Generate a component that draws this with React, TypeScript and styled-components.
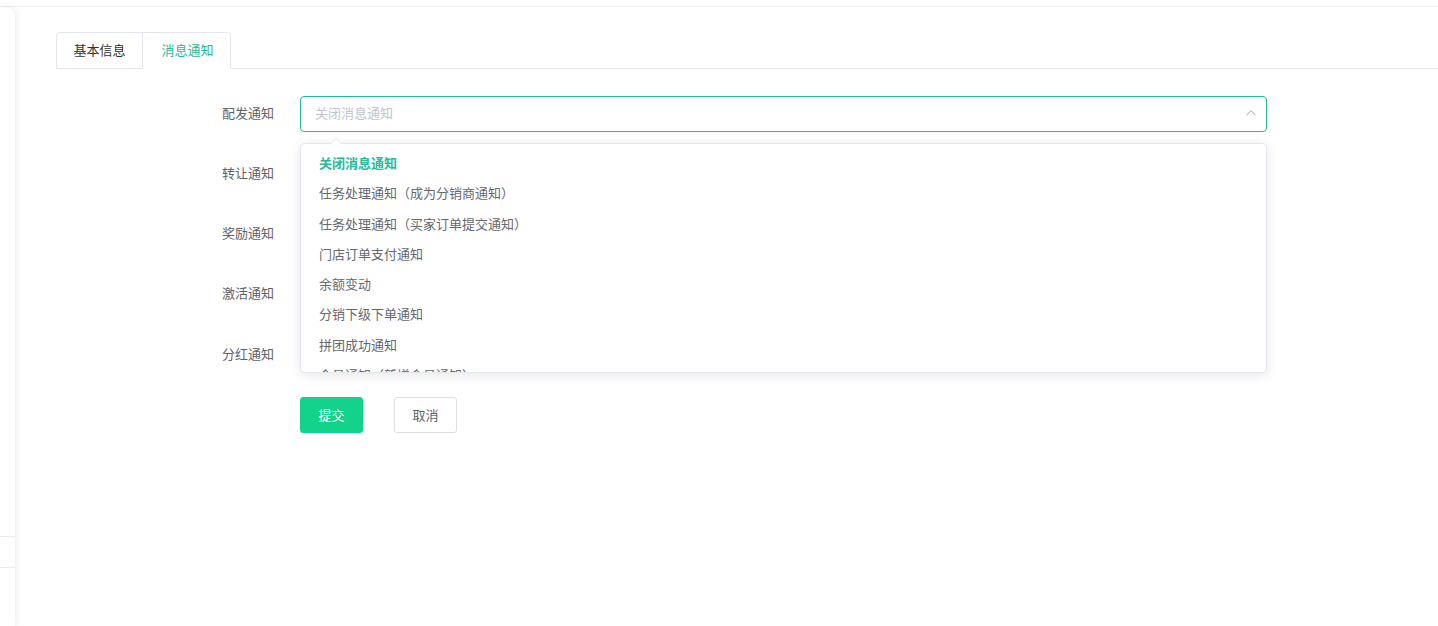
import * as React from 'react'
import styled, { createGlobalStyle } from 'styled-components'

const TEAL = '#26b99a'

const GlobalStyle = createGlobalStyle`
  html, body {
    margin: 0;
    padding: 0;
    background: #ffffff;
  }
  body {
    font-family: "Noto Sans CJK SC", "Noto Sans", sans-serif;
    font-size: 13px;
    color: #606266;
  }
  * {
    box-sizing: border-box;
  }
`

const labels = ['配发通知', '转让通知', '奖励通知', '激活通知', '分红通知']

const options = [
  '关闭消息通知',
  '任务处理通知（成为分销商通知）',
  '任务处理通知（买家订单提交通知）',
  '门店订单支付通知',
  '余额变动',
  '分销下级下单通知',
  '拼团成功通知',
  '会员通知（新增会员通知）',
]

export default function App() {
  return (
    <>
      <GlobalStyle />
      <TopBar />
      <Layout>
        <Sidebar>
          <SideSpacer />
          <SideRow />
          <SideRow />
        </Sidebar>
        <Main>
          <Tabs>
            <Tab>基本信息</Tab>
            <Tab active>消息通知</Tab>
            <TabRest />
          </Tabs>
          <Form>
            {labels.map((label, i) => (
              <FormItem key={label}>
                <Label>{label}</Label>
                {i === 0 && (
                  <SelectWrap>
                    <Select>
                      <Placeholder>关闭消息通知</Placeholder>
                      <svg width="12" height="12" viewBox="0 0 12 12">
                        <path
                          d="M1.5 8 L6 3.8 L10.5 8"
                          fill="none"
                          stroke="#c0c4cc"
                          strokeWidth="1.2"
                        />
                      </svg>
                    </Select>
                    <Dropdown>
                      <Arrow />
                      <OptionList>
                        {options.map((o, j) => (
                          <Option key={o} selected={j === 0}>
                            {o}
                          </Option>
                        ))}
                      </OptionList>
                    </Dropdown>
                  </SelectWrap>
                )}
              </FormItem>
            ))}
            <Actions>
              <Button primary>提交</Button>
              <Button>取消</Button>
            </Actions>
          </Form>
        </Main>
      </Layout>
    </>
  )
}

const TopBar = styled.div`
  height: 7px;
  border-bottom: 1px solid #eeeff2;
`

const Layout = styled.div`
  display: flex;
  min-height: 619px;
`

const Sidebar = styled.div`
  width: 15px;
  flex-shrink: 0;
  display: flex;
  flex-direction: column;
  background: #ffffff;
  border-top-right-radius: 10px;
  box-shadow: 2px 0 6px rgba(0, 0, 0, 0.07);
  z-index: 1;
`

const SideSpacer = styled.div`
  height: 529px;
`

const SideRow = styled.div`
  height: 31px;
  border-top: 1px solid #e8e9ee;
`

const Main = styled.div`
  flex: 1;
  padding: 25px 0 0 41px;
`

const Tabs = styled.div`
  display: flex;
  height: 37px;
`

const Tab = styled.div<{ active?: boolean }>`
  width: ${p => (p.active ? 88 : 87)}px;
  display: flex;
  align-items: center;
  justify-content: center;
  padding: ${p => (p.active ? '0 0 2px 2px' : '0 0 2px 0')};
  border: 1px solid #e4e7ed;
  border-left-width: ${p => (p.active ? 0 : 1)}px;
  border-bottom-color: ${p => (p.active ? '#ffffff' : '#e4e7ed')};
  border-top-left-radius: ${p => (p.active ? 0 : 4)}px;
  border-top-right-radius: ${p => (p.active ? 4 : 0)}px;
  color: ${p => (p.active ? TEAL : '#303133')};
  font-size: 13px;
`

const TabRest = styled.div`
  flex: 1;
  border-bottom: 1px solid #e4e7ed;
`

const Form = styled.div`
  padding-top: 27px;
`

const FormItem = styled.div`
  display: flex;
  align-items: center;
  height: 36px;
  margin-bottom: 24.3px;
`

const Label = styled.div`
  width: 244px;
  padding: 0 26px 4px 0;
  text-align: right;
  color: #606266;
  font-size: 13px;
  flex-shrink: 0;
`

const SelectWrap = styled.div`
  position: relative;
  width: 967px;
`

const Select = styled.div`
  height: 36px;
  border: 1px solid ${TEAL};
  border-radius: 4px;
  display: flex;
  align-items: center;
  justify-content: space-between;
  padding: 0 9px 3px 14px;
`

const Placeholder = styled.span`
  color: #c0c4cc;
  font-size: 13px;
`

const Dropdown = styled.div`
  position: absolute;
  top: 47px;
  left: 0;
  right: 0;
  height: 230px;
  background: #ffffff;
  border: 1px solid #e4e7ed;
  border-radius: 4px;
  box-shadow: 0 2px 12px rgba(0, 0, 0, 0.1);
  z-index: 10;
`

const Arrow = styled.div`
  position: absolute;
  top: -6px;
  left: 29px;
  width: 0;
  height: 0;
  border-left: 6px solid transparent;
  border-right: 6px solid transparent;
  border-bottom: 6px solid #e4e7ed;

  &::after {
    content: '';
    position: absolute;
    top: 1px;
    left: -6px;
    border-left: 6px solid transparent;
    border-right: 6px solid transparent;
    border-bottom: 6px solid #ffffff;
  }
`

const OptionList = styled.div`
  height: 100%;
  overflow: hidden;
  padding-top: 4px;
`

const Option = styled.div<{ selected?: boolean }>`
  height: 30.3px;
  line-height: 30.3px;
  padding-left: 18px;
  font-size: 13px;
  color: ${p => (p.selected ? TEAL : '#66686d')};
  font-weight: ${p => (p.selected ? 700 : 400)};
`

const Actions = styled.div`
  display: flex;
  gap: 31px;
  padding-left: 244px;
  margin-top: 4px;
`

const Button = styled.button<{ primary?: boolean }>`
  width: 63px;
  height: 36px;
  border-radius: 3px;
  border: 1px solid ${p => (p.primary ? '#13d38a' : '#dcdfe6')};
  background: ${p => (p.primary ? '#13d38a' : '#ffffff')};
  color: ${p => (p.primary ? '#ffffff' : '#606266')};
  font-family: inherit;
  font-size: 13px;
  padding: 0 0 2px 0;
  cursor: pointer;
`
